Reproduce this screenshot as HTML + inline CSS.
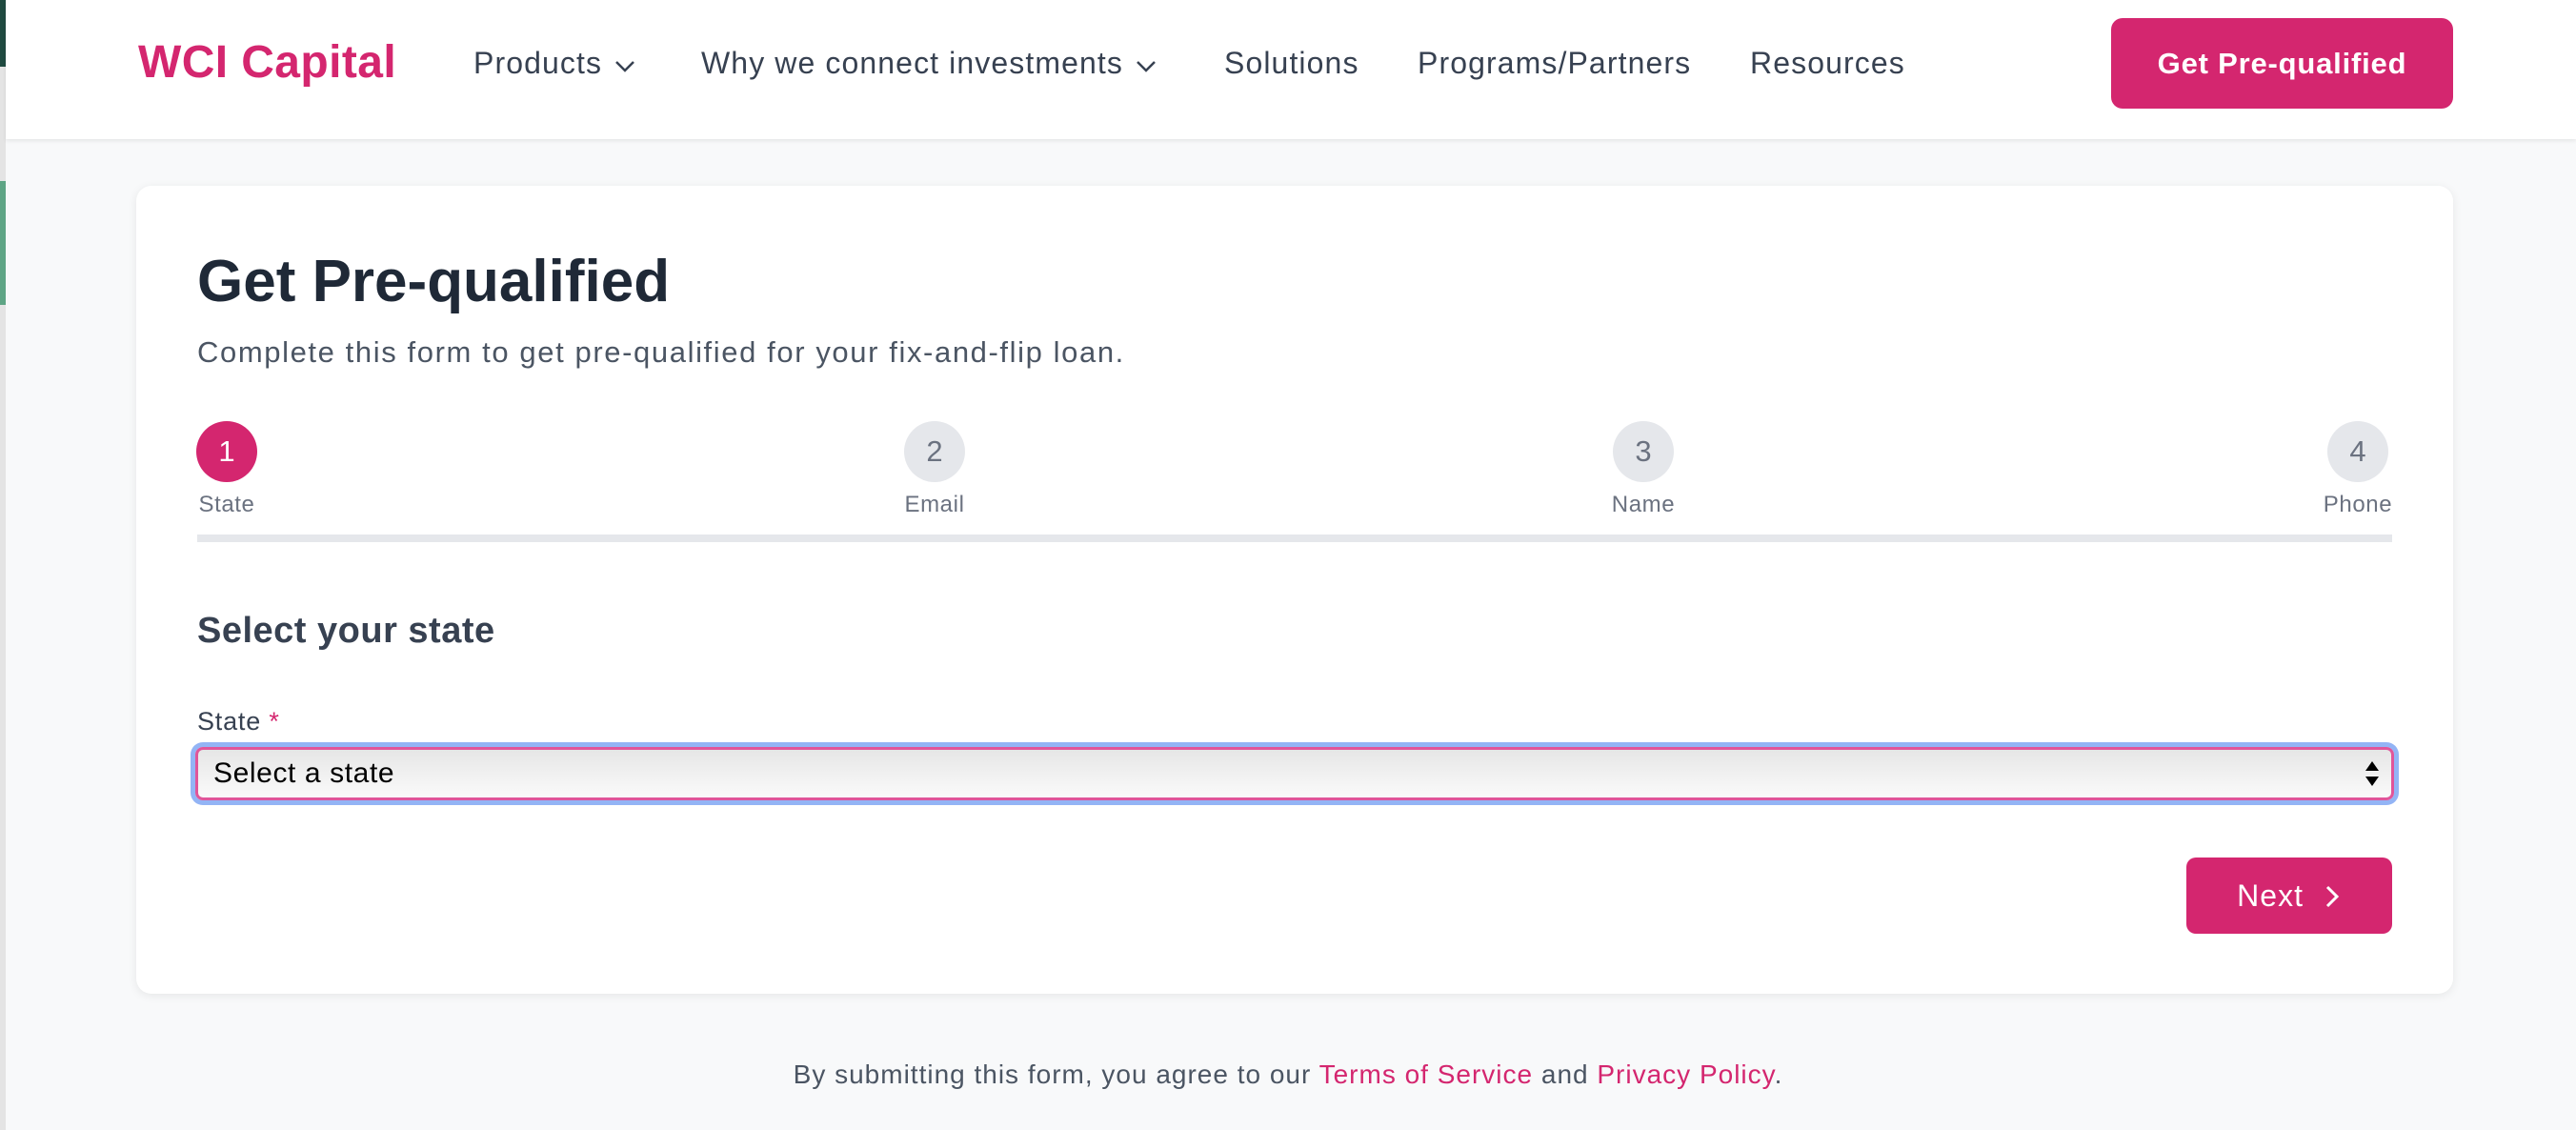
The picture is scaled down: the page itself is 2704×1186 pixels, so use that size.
<!DOCTYPE html>
<html><head><meta charset="utf-8"><style>
*{box-sizing:border-box;margin:0;padding:0}
body{width:2704px;height:1186px;background:#f8f9fa;font-family:"Liberation Sans",Arial,sans-serif;position:relative;overflow:hidden;color:#1f2937}
.strip{position:absolute;left:0;top:0;width:6px;height:1186px;background:#e4e4e4}
header{position:absolute;left:6px;top:0;width:2698px;height:146px;background:#fff;box-shadow:0 2px 4px rgba(0,0,0,.08)}
.logo{position:absolute;left:139px;top:38px;font-size:48px;font-weight:bold;color:#d4266f;letter-spacing:0.4px}
.nav{position:absolute;top:48px;font-size:32px;color:#374151;letter-spacing:1.1px}
.nav svg{vertical-align:middle;margin-left:12px}
.hbtn{position:absolute;left:2210px;top:19px;width:359px;height:95px;background:#d4266f;border-radius:12px;color:#fff;font-size:31px;font-weight:bold;text-align:center;line-height:95px;letter-spacing:0.8px}
.card{position:absolute;left:143px;top:195px;width:2432px;height:848px;background:#fff;border-radius:16px;box-shadow:0 2px 10px rgba(0,0,0,.08)}
h1{position:absolute;left:64px;top:65px;font-size:62px;font-weight:bold;color:#1f2937}
.sub{position:absolute;left:64px;top:157px;font-size:31px;color:#4b5563;letter-spacing:1.6px}
.step{position:absolute;top:247px;width:120px;margin-left:-60px;text-align:center}
.c{width:64px;height:64px;border-radius:50%;margin:0 auto;background:#e5e7eb;color:#6b7280;font-size:31px;line-height:64px}
.step.a .c{background:#d4266f;color:#fff}
.l{font-size:24px;color:#6b7280;margin-top:10px;letter-spacing:0.6px}
.bar{position:absolute;left:64px;top:366px;width:2304px;height:8px;background:#e5e7eb}
h2{position:absolute;left:64px;top:446px;font-size:38px;font-weight:bold;color:#374151;letter-spacing:0.5px}
.lab{position:absolute;left:64px;top:547px;font-size:27px;color:#374151;letter-spacing:0.8px}
.lab span{color:#d4266f}
.sel{position:absolute;left:62px;top:589px;width:2308px;height:56px;border:3px solid #e0559a;border-radius:8px;box-shadow:0 0 0 5px #93b4f5;background:linear-gradient(#e6e6e6,#fafafa);font-size:30px;color:#000;padding-left:16px;line-height:50px;letter-spacing:0.6px}
.arr{position:absolute;right:12px;top:10px}
.next{position:absolute;left:2152px;top:705px;width:216px;height:80px;background:#d4266f;border-radius:10px;color:#fff;font-size:32px;line-height:80px;text-align:center;letter-spacing:1px}
.foot{position:absolute;left:0;width:2704px;top:1112px;text-align:center;font-size:28px;color:#4b5563;letter-spacing:1px}
.foot span{color:#d4266f}
</style></head><body>
<div class="strip"><div style="height:70px;background:#1f4a40"></div><div style="height:120px;background:#e4e4e4"></div><div style="height:130px;background:#5ea585"></div></div>
<header>
<div class="logo">WCI Capital</div>
<div class="nav" style="left:491px">Products<svg width="24" height="16" viewBox="0 0 24 16"><path d="M3 4l9 9 9-9" fill="none" stroke="#374151" stroke-width="2.5"/></svg></div>
<div class="nav" style="left:730px">Why we connect investments<svg width="24" height="16" viewBox="0 0 24 16"><path d="M3 4l9 9 9-9" fill="none" stroke="#374151" stroke-width="2.5"/></svg></div>
<div class="nav" style="left:1279px">Solutions</div>
<div class="nav" style="left:1482px">Programs/Partners</div>
<div class="nav" style="left:1831px">Resources</div>
<div class="hbtn">Get Pre-qualified</div>
</header>
<div class="card">
<h1>Get Pre-qualified</h1>
<div class="sub">Complete this form to get pre-qualified for your fix-and-flip loan.</div>
<div class="step a" style="left:95px"><div class="c">1</div><div class="l">State</div></div>
<div class="step" style="left:838px"><div class="c">2</div><div class="l">Email</div></div>
<div class="step" style="left:1582px"><div class="c">3</div><div class="l">Name</div></div>
<div class="step" style="left:2332px"><div class="c">4</div><div class="l">Phone</div></div>
<div class="bar"></div>
<h2>Select your state</h2>
<div class="lab">State <span>*</span></div>
<div class="sel">Select a state<svg class="arr" width="16" height="30" viewBox="0 0 16 30"><path d="M8 2l7 10H1z M8 28l7-10H1z" fill="#000"/></svg></div>
<div class="next">Next <svg width="20" height="28" viewBox="0 0 20 28" style="vertical-align:middle;margin-left:10px;margin-top:-4px"><path d="M5 4l10 10-10 10" fill="none" stroke="#fff" stroke-width="3"/></svg></div>
</div>
<div class="foot">By submitting this form, you agree to our <span>Terms of Service</span> and <span>Privacy Policy</span>.</div>
</body></html>
